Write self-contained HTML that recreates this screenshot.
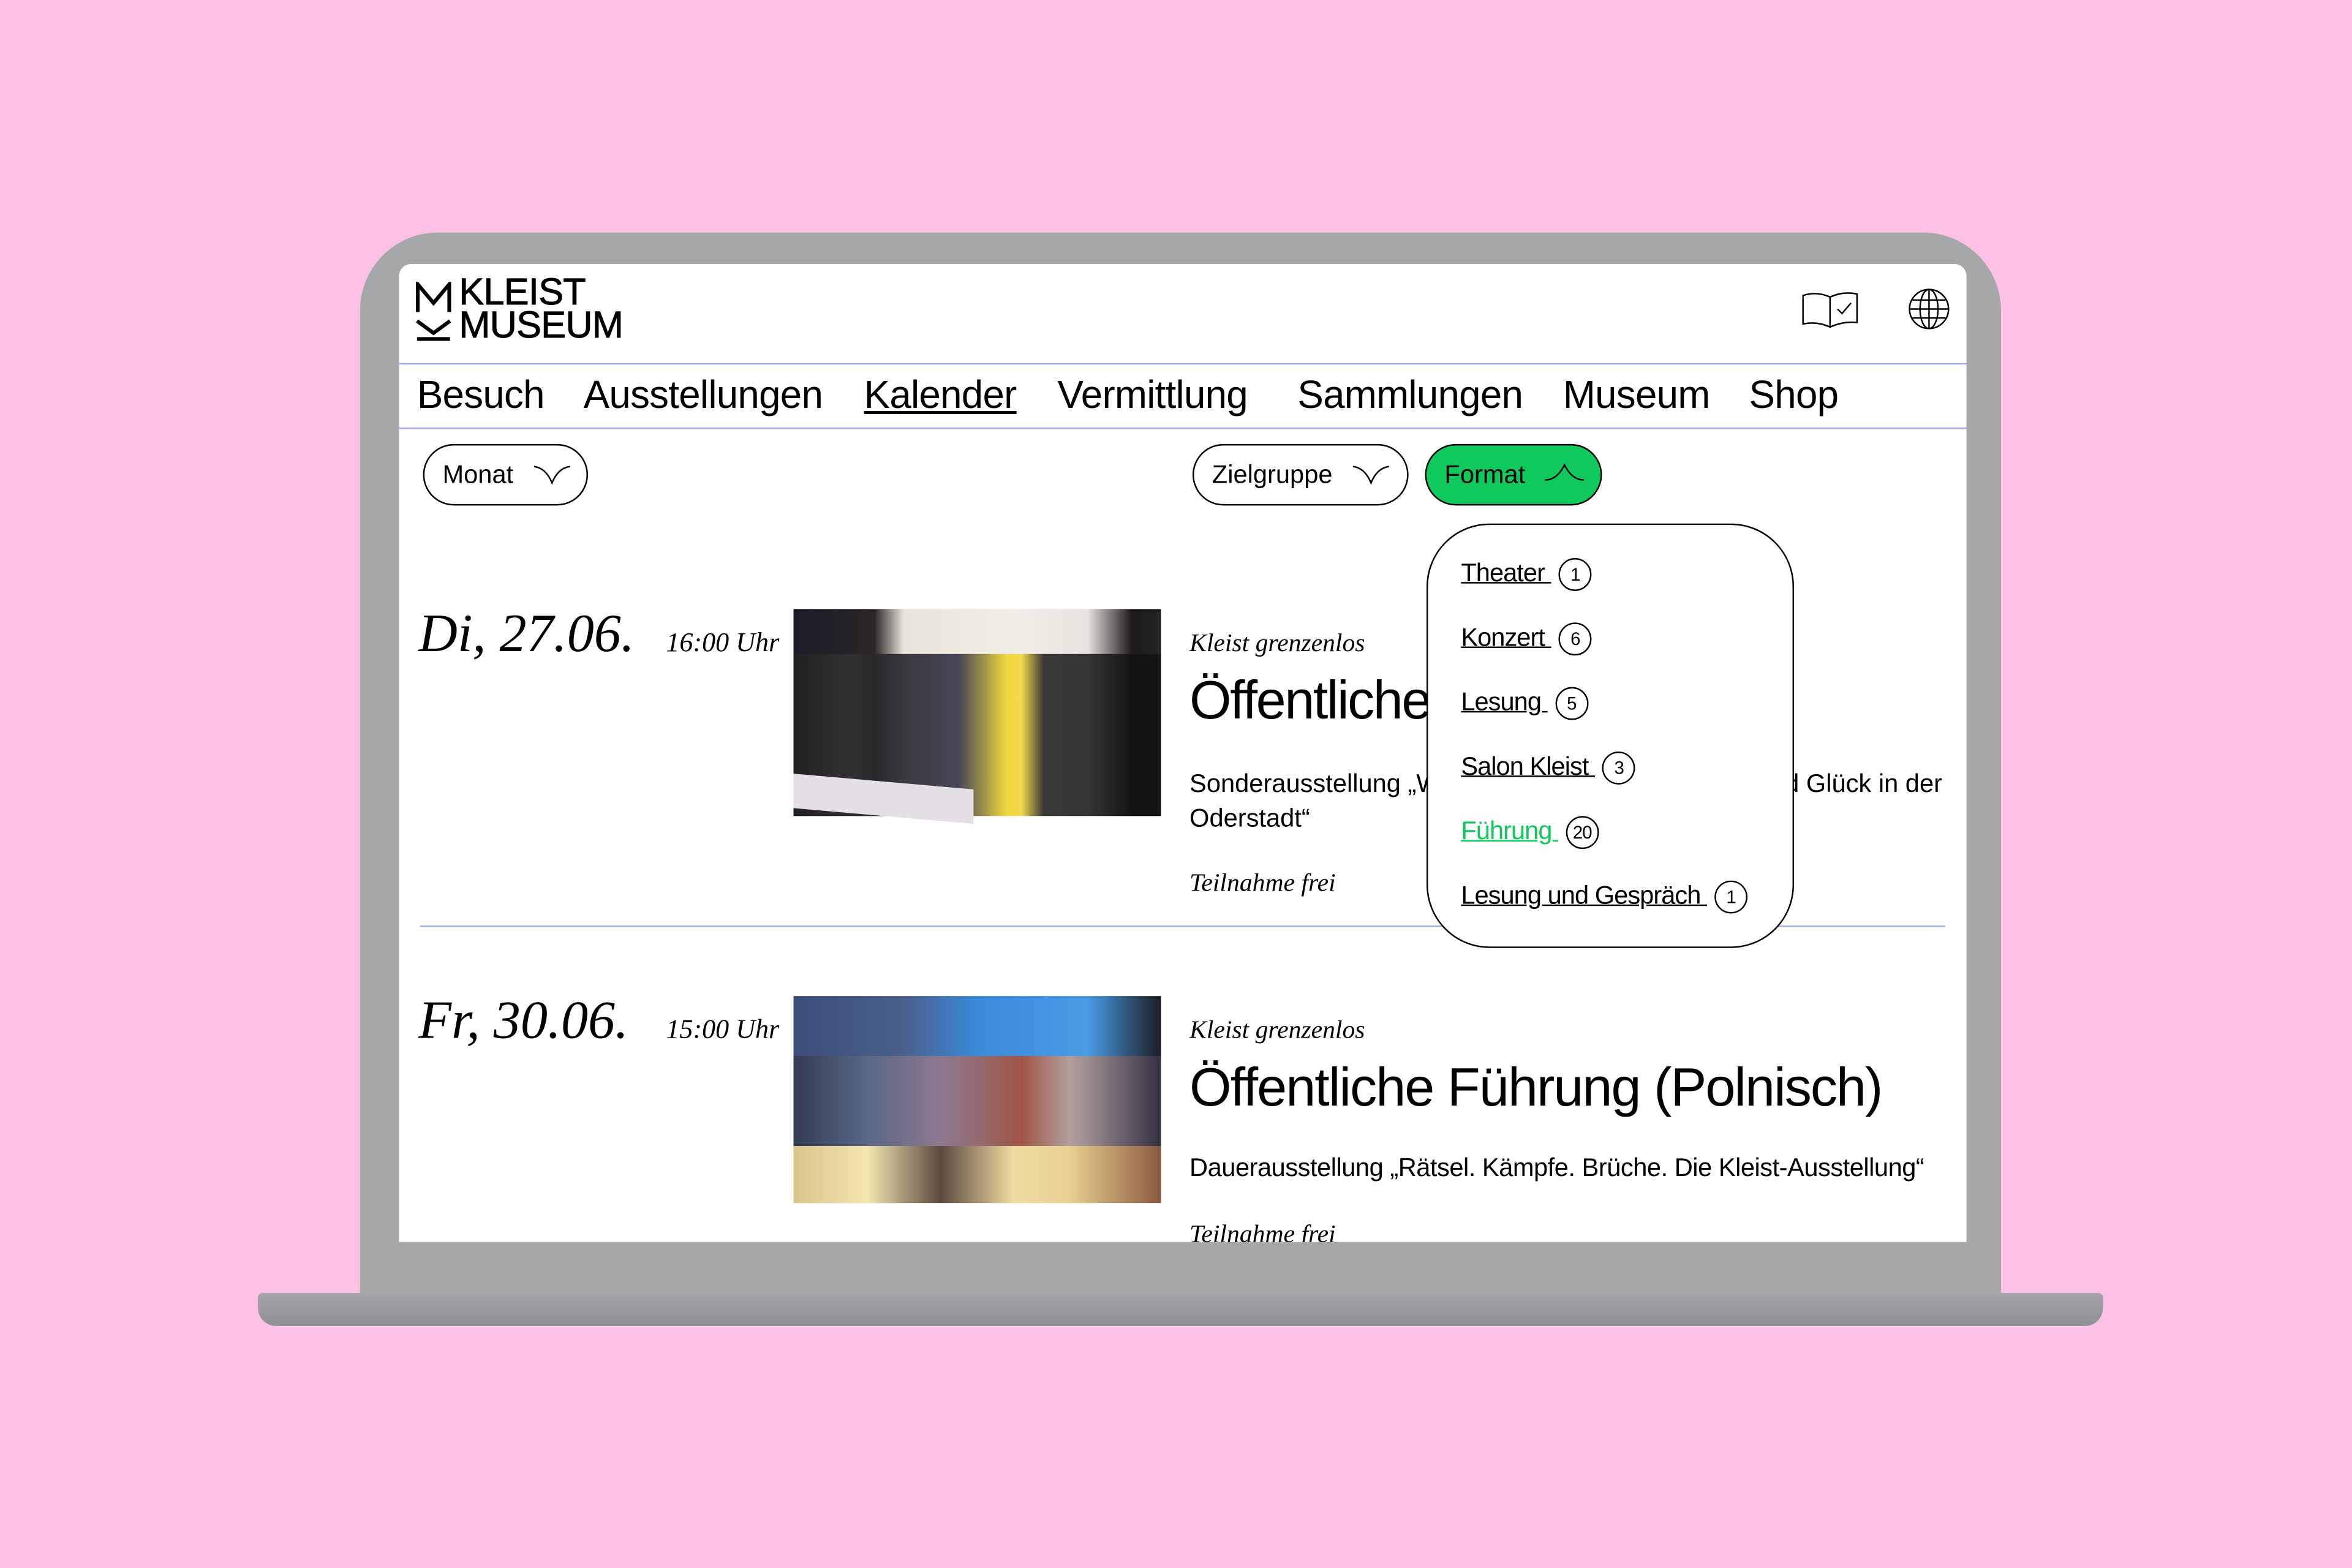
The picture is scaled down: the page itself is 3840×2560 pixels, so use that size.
<!DOCTYPE html>
<html><head><meta charset="utf-8"><style>
*{margin:0;padding:0;box-sizing:border-box}
html,body{width:3840px;height:2560px;overflow:hidden;background:#fdc1e5}
#s{position:absolute;left:0;top:0;width:1568px;height:1045px;transform:scale(2.449);transform-origin:0 0;font-family:"Liberation Sans",sans-serif;color:#000}
.a{position:absolute}
.lid{left:240px;top:155px;width:1094px;height:712px;background:#a6a7a9;border-radius:52px 52px 0 0}
.base{left:172px;top:862px;width:1230px;height:22px;background:linear-gradient(#a3a4a7,#8f9093);border-radius:3px 3px 12px 12px}
.scr{left:266px;top:176px;width:1045px;height:652px;background:#fff;border-radius:8px 8px 0 0;overflow:hidden}
.hl{position:absolute;left:0;width:100%;height:1px;background:#a5acf5}
.nav{position:absolute;top:72px;font-size:26px;letter-spacing:-0.3px}
.pill{position:absolute;top:120px;height:41px;border:1px solid #000;border-radius:21px;font-size:17px;line-height:39px;padding-left:12px}
.ser{font-family:"Liberation Serif",serif;font-style:italic}
.dd{position:absolute;left:685px;top:173px;width:245px;height:283px;border:1px solid #000;border-radius:42px;background:#fff}
.it{position:absolute;left:22px;font-size:17px;text-decoration:underline;letter-spacing:-0.4px}
.c{display:inline-block;width:22px;height:22px;border:1px solid #000;border-radius:50%;font-size:12px;line-height:20px;text-align:center;text-decoration:none;vertical-align:middle;margin-left:5px;color:#000}
</style></head><body><div id="s">
<div class="a lid"></div>
<div class="a base"></div>
<div class="a scr">
 <svg class="a" style="left:11px;top:12px" width="24" height="40" viewBox="0 0 24 40"><path d="M1.5 20V1.5L12 14L22.5 1.5V20" fill="none" stroke="#000" stroke-width="2.5"/><path d="M1 26L12 34L23 26M1 38H23" fill="none" stroke="#000" stroke-width="2.5"/></svg>
 <div class="a" style="left:40px;top:8px;font-size:25px;line-height:22px;letter-spacing:-0.3px;-webkit-text-stroke:0.4px #000">KLEIST<br>MUSEUM</div>
 <svg class="a" style="left:935px;top:17px" width="40" height="28" viewBox="0 0 40 28"><path d="M1 4Q10 1 19 5V25Q10 21 1 23Z M19 5Q28 1 37 3V22Q28 21 19 25" fill="none" stroke="#000" stroke-width="1"/><path d="M24 13L27 16L33 9" fill="none" stroke="#000" stroke-width="1"/></svg>
 <svg class="a" style="left:1006px;top:16px" width="28" height="28" viewBox="0 0 28 28" fill="none" stroke="#000" stroke-width="1"><circle cx="14" cy="14" r="13"/><ellipse cx="14" cy="14" rx="6" ry="13"/><path d="M14 1V27M1 14H27M3 8H25M3 20H25"/></svg>
 <div class="hl" style="top:66px"></div>
 <div class="nav" style="left:12px">Besuch</div>
 <div class="nav" style="left:123px">Ausstellungen</div>
 <div class="nav" style="left:310px;text-decoration:underline">Kalender</div>
 <div class="nav" style="left:439px">Vermittlung</div>
 <div class="nav" style="left:599px">Sammlungen</div>
 <div class="nav" style="left:776px">Museum</div>
 <div class="nav" style="left:900px">Shop</div>
 <div class="hl" style="top:109px"></div>
 <div class="pill" style="left:16px;width:110px">Monat</div>
 <svg class="a" style="left:90px;top:134px" width="24" height="14"><path d="M0 1Q8 2 12 12Q16 2 24 1" fill="none" stroke="#000"/></svg>
 <div class="pill" style="left:529px;width:144px">Zielgruppe</div>
 <svg class="a" style="left:636px;top:134px" width="24" height="14"><path d="M0 1Q8 2 12 12Q16 2 24 1" fill="none" stroke="#000"/></svg>
 <div class="pill" style="left:684px;width:118px;background:#10c95c">Format</div>
 <svg class="a" style="left:764px;top:132px" width="26" height="14"><path d="M0 12Q8 12 13 2Q18 12 26 12" fill="none" stroke="#000"/></svg>

 <div class="a ser" style="left:13px;top:225px;font-size:36px">Di, 27.06.</div>
 <div class="a ser" style="left:178px;top:242px;font-size:18px">16:00 Uhr</div>
 <div class="a" style="left:263px;top:230px;width:245px;height:138px;background:linear-gradient(90deg,#1a1c28 0%,#2b2628 22%,#e9e4da 30%,#f2eee6 60%,#e8e3de 80%,#1e1a1e 92%,#222 100%)">
  <div class="a" style="left:0;top:30px;width:245px;height:108px;background:linear-gradient(90deg,#222 0%,#333 15%,#1b1b22 30%,#2a2a40 45%,#f0d420 58%,#f2d630 62%,#1a1a1a 68%,#111 100%);opacity:.85"></div>
  <div class="a" style="left:0;top:115px;width:120px;height:23px;background:#e5dfe6;transform:skewY(5deg)"></div>
 </div>
 <div class="a ser" style="left:527px;top:243px;font-size:17px">Kleist grenzenlos</div>
 <div class="a" style="left:527px;top:270px;font-size:36px;letter-spacing:-1px;white-space:nowrap">Öffentliche Führung</div>
 <div class="a" style="left:527px;top:335px;white-space:nowrap;font-size:17px;line-height:23px;letter-spacing:0">Sonderausstellung „Wir und Kleist?! Leben, Liebe und Glück in der<br>Oderstadt“</div>
 <div class="a ser" style="left:527px;top:403px;font-size:17px">Teilnahme frei</div>
 <div class="hl" style="top:441px;left:14px;width:1017px"></div>

 <div class="a ser" style="left:13px;top:483px;font-size:36px">Fr, 30.06.</div>
 <div class="a ser" style="left:178px;top:500px;font-size:18px">15:00 Uhr</div>
 <div class="a" style="left:263px;top:488px;width:245px;height:138px;background:linear-gradient(90deg,#3c4e78 0%,#4a5f8c 30%,#3a8ad8 50%,#4a9be6 80%,#1c1c22 100%)">
  <div class="a" style="left:0;top:40px;width:245px;height:60px;background:linear-gradient(90deg,#33384e 0%,#5b6a86 20%,#9a7a8a 40%,#b04a2a 62%,#c5a090 75%,#3a3448 100%);opacity:.85"></div>
  <div class="a" style="left:0;top:100px;width:245px;height:38px;background:linear-gradient(90deg,#d9c48a,#f4e6b0 20%,#5a4a40 40%,#f0dca0 60%,#e8d090 75%,#8a5a40 100%)"></div>
 </div>
 <div class="a ser" style="left:527px;top:501px;font-size:17px">Kleist grenzenlos</div>
 <div class="a" style="left:527px;top:528px;font-size:36px;letter-spacing:-0.8px;white-space:nowrap">Öffentliche Führung (Polnisch)</div>
 <div class="a" style="left:527px;top:593px;font-size:17px;letter-spacing:-0.2px;white-space:nowrap">Dauerausstellung „Rätsel. Kämpfe. Brüche. Die Kleist-Ausstellung“</div>
 <div class="a ser" style="left:527px;top:637px;font-size:17px">Teilnahme frei</div>

 <div class="dd">
  <div class="it" style="top:22px">Theater <span class="c">1</span></div>
  <div class="it" style="top:65px">Konzert <span class="c">6</span></div>
  <div class="it" style="top:108px">Lesung <span class="c">5</span></div>
  <div class="it" style="top:151px">Salon Kleist <span class="c">3</span></div>
  <div class="it" style="top:194px;color:#10c95c">Führung <span class="c">20</span></div>
  <div class="it" style="top:237px">Lesung und Gespräch <span class="c">1</span></div>
 </div>
</div>
</div></body></html>
